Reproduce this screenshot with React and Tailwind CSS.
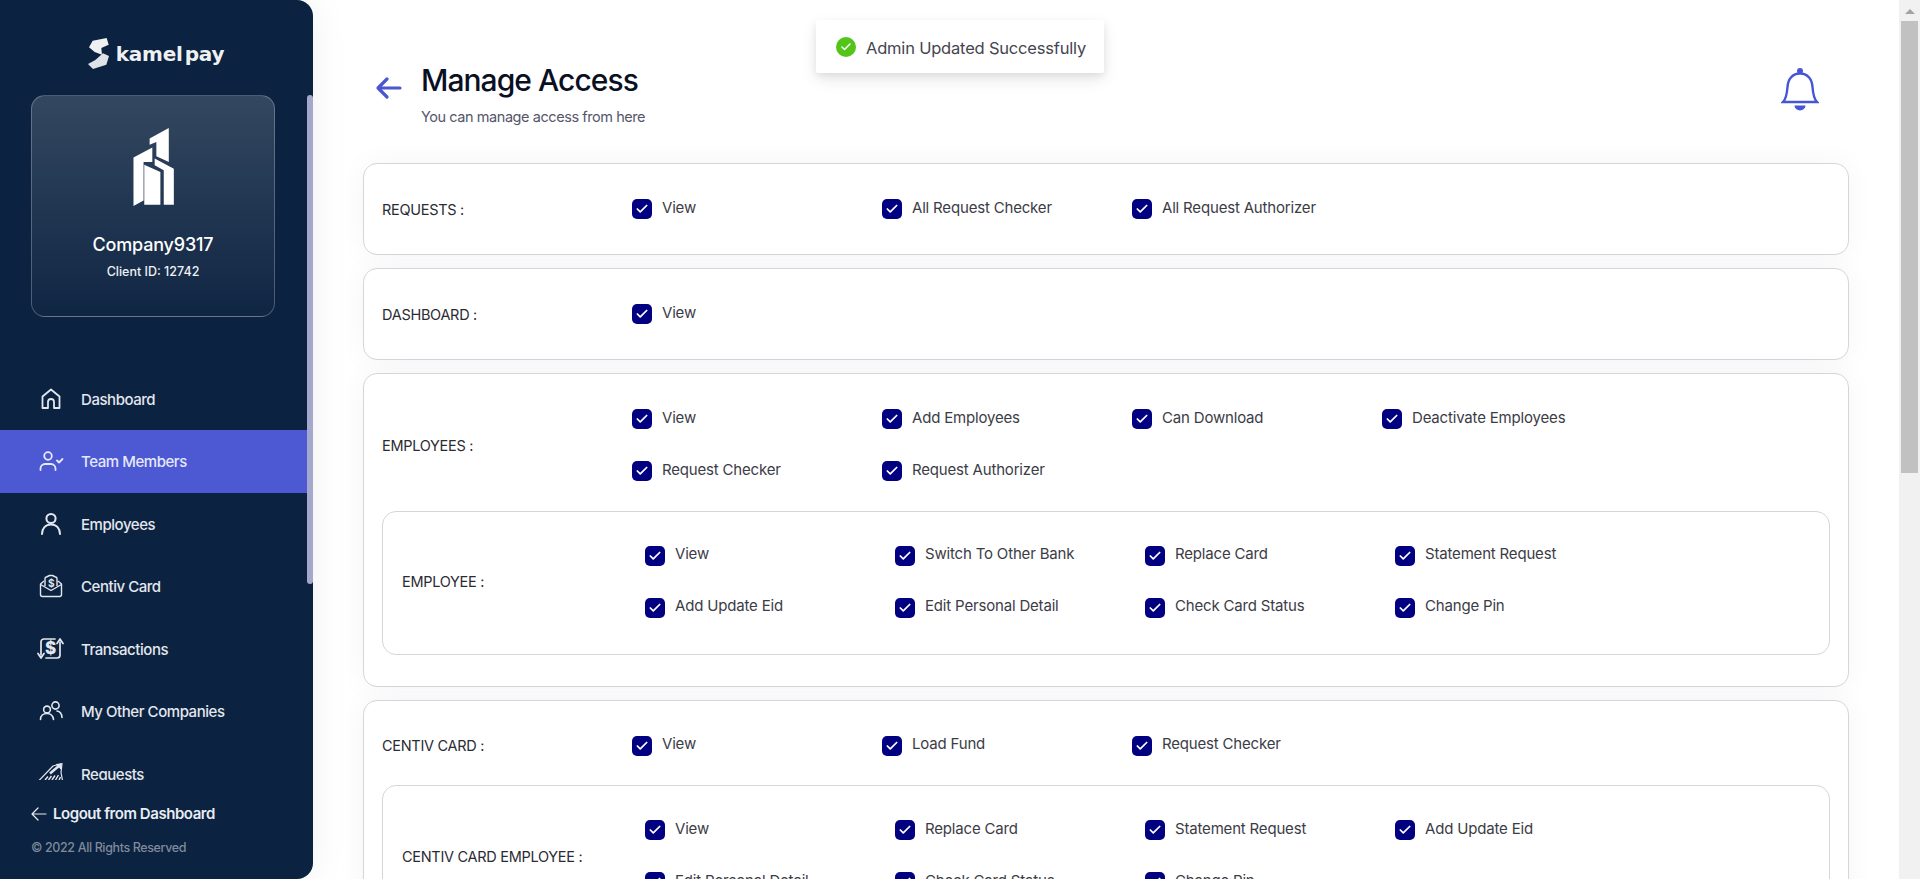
import { Check } from 'lucide-react';

const FONT = "font-['Inter','Noto_Sans',sans-serif]";

const navItems = [
  { label: 'Dashboard', icon: HomeIcon },
  { label: 'Team Members', icon: TeamIcon, active: true },
  { label: 'Employees', icon: UserIcon },
  { label: 'Centiv Card', icon: EnvelopeIcon },
  { label: 'Transactions', icon: TransferIcon },
  { label: 'My Other Companies', icon: UsersIcon },
  { label: 'Requests', icon: RequestsIcon },
];

function HomeIcon() {
  return (
    <svg width="26" height="26" viewBox="0 0 26 26" fill="none" stroke="currentColor" strokeWidth="1.8" strokeLinejoin="round">
      <path d="M4.500 10.500 13 3.500l8.500 7V22H16v-6a3 3 0 0 0-6 0v6H4.500z" />
    </svg>
  );
}

function TeamIcon() {
  return (
    <svg width="26" height="26" viewBox="0 0 26 26" fill="none" stroke="currentColor" strokeWidth="1.8" strokeLinecap="round" strokeLinejoin="round">
      <circle cx="10" cy="8" r="3.800" />
      <path d="M2.500 22v-1.500c0-2.500 2-4.500 4.500-4.500h6c2.500 0 4.500 2 4.500 4.500V22" />
      <path d="m19 12.500 2 2 3.500-3.500" />
    </svg>
  );
}

function UserIcon() {
  return (
    <svg width="26" height="26" viewBox="0 0 26 26" fill="none" stroke="currentColor" strokeWidth="2" strokeLinecap="round">
      <circle cx="13" cy="7.500" r="4.600" />
      <path d="M4 23c0-5.500 3.500-9.500 9-9.500s9 4 9 9.500" />
    </svg>
  );
}

function EnvelopeIcon() {
  return (
    <svg width="26" height="26" viewBox="0 0 26 26" fill="none" stroke="currentColor" strokeWidth="1.400" strokeLinejoin="round">
      <path d="M6 8 2.500 11v10.500a2 2 0 0 0 2 2h17a2 2 0 0 0 2-2V11L20 8" />
      <path d="M2.500 11.500 13 17.500l10.500-6" />
      <path d="M7 13V5.500A1.500 1.500 0 0 1 8.500 4l3-1.500h3L17.500 4A1.500 1.500 0 0 1 19 5.500V13" />
      <text x="13" y="13.500" textAnchor="middle" fontSize="10" fontWeight="700" fill="currentColor" stroke="none" fontFamily="Inter, sans-serif">$</text>
    </svg>
  );
}

function TransferIcon() {
  return (
    <svg width="27" height="23" viewBox="0 0 27 23" fill="none" stroke="currentColor" strokeWidth="1.700" strokeLinecap="round" strokeLinejoin="round">
      <path d="M4 18V5a3 3 0 0 1 3-3h11" />
      <path d="M23 5v13a3 3 0 0 1-3 3H9" />
      <path d="m1 16.500 3 4.500 3-4.500" />
      <path d="m20 6.500 3-4.500 3 4.500" />
      <text x="13.500" y="17" textAnchor="middle" fontSize="17" fontWeight="800" fill="currentColor" stroke="none" fontFamily="Inter, sans-serif">$</text>
    </svg>
  );
}

function UsersIcon() {
  return (
    <svg width="26" height="26" viewBox="0 0 26 26" fill="none" stroke="currentColor" strokeWidth="1.600" strokeLinecap="round">
      <circle cx="9" cy="11.500" r="3.400" />
      <path d="M2.500 21.500c0-3.500 2.500-6 6.500-6s6 2.500 6.500 6" />
      <circle cx="17.500" cy="7.500" r="3.600" />
      <path d="M19 13c3 .5 4.800 2.800 5 6.500" />
    </svg>
  );
}

function RequestsIcon() {
  return (
    <svg width="26" height="26" viewBox="0 0 26 26" fill="none" stroke="currentColor" strokeWidth="1.200" strokeLinejoin="round">
      <path d="M1 19.500 15 5l9-2.500-1 9 1.500 8z" />
      <path d="m12 12.500 10-8.500" strokeWidth="2.400" />
      <path d="m18 3.500 5-.5-.5 5" fill="currentColor" />
      <path d="m7 19 3-3.500M10.500 19l3-4M14 19l3-4.500M17.500 19l3-5M21 19l1.500-3" strokeWidth="1.400" />
    </svg>
  );
}

function BellIcon() {
  return (
    <svg width="38" height="44" viewBox="0 0 38 44" fill="none" className="text-[#4655d6]">
      <path d="M2 35c3.500-3.500 4-8.500 4.500-15 .5-8 5-13.500 12.500-13.500S31 12 31.500 20c.5 6.500 1 11.500 4.500 15z" stroke="currentColor" strokeWidth="2.400" />
      <circle cx="19" cy="4" r="3" fill="currentColor" />
      <path d="M13.500 38.500h11a5.500 5 0 0 1-11 0z" fill="currentColor" />
    </svg>
  );
}

function NavItem({ item }) {
  const Icon = item.icon;
  return (
    <div className={`flex h-[62.500px] shrink-0 items-center gap-[17px] pl-[37px] text-[15px] font-medium tracking-[-0.03em] ${item.active ? 'bg-[#4c59d2] text-[#e6e8fb]' : 'text-[#e3e7ee]'}`}>
      <span className="flex w-[27px] justify-center"><Icon /></span>
      <span className="translate-y-[0.500px]">{item.label}</span>
    </div>
  );
}

function Sidebar() {
  return (
    <aside className="flex h-[879px] w-[313px] shrink-0 overflow-hidden rounded-r-[16px] bg-[#0b2240] shadow-[0_0_40px_rgba(0,0,0,0.06)]">
      <div className="flex w-[307px] flex-col">
        <div className="flex h-[95px] items-start justify-center gap-[7px] pt-[38px] pl-[5px]">
          <svg width="21" height="31" viewBox="0 0 63 93" className="text-[#eef0f2]">
            <path d="M14 8 56 0l6 20-22 10 2 20-22-8L3 28z" fill="currentColor" />
            <path d="m45 46 18 8-8 26-40 13L0 78l22-12z" fill="#dfe2e6" />
          </svg>
          <span className="mt-[3px] font-['DejaVu_Sans',sans-serif] text-[20px] leading-[26px] font-bold tracking-[-0.01em] text-[#eef0f2]">
            kamel<span className="ml-[2px]">pay</span>
          </span>
        </div>
        <div className="mx-[31px] flex h-[222px] w-[244px] flex-col items-center rounded-[14px] border border-white/25 bg-gradient-to-b from-white/[0.17] to-white/[0.02]">
          <svg width="42" height="78" viewBox="40 24 122 232" className="mt-[32px] ml-[2px] text-white">
            <path d="M88 55 145 24v101l-37-17V66L88 74z" fill="currentColor" />
            <path d="M40 112 96 82v43L70 125v115l-30 16z" fill="currentColor" />
            <path d="m72 133 48 22v97H72z" fill="currentColor" />
            <path d="m103 115 57 30v107h-30V150l-27-15z" fill="currentColor" />
          </svg>
          <div className="mt-[26px] text-[18px] leading-[26px] font-medium tracking-[-0.01em] text-white">Company9317</div>
          <div className="mt-[5px] text-[12.500px] leading-[18px] font-medium text-[#eef0f4]">Client ID: 12742</div>
        </div>
        <nav className="mt-[50.500px] flex min-h-0 flex-1 flex-col overflow-hidden">
          {navItems.map((item) => (
            <NavItem key={item.label} item={item} />
          ))}
        </nav>
        <div className="h-[99px] shrink-0 pl-[31px]">
          <div className="mt-[22px] flex h-[24px] items-center gap-[6px] text-[15px] font-semibold tracking-[-0.03em] text-[#e9ecf2]">
            <svg width="16" height="14" viewBox="0 0 16 14" fill="none" stroke="currentColor" strokeWidth="1.200" strokeLinecap="round" strokeLinejoin="round">
              <path d="M15 7H1M7 1 1 7l6 6" />
            </svg>
            Logout from Dashboard
          </div>
          <div className="mt-[13px] text-[12.500px] leading-[18px] font-medium tracking-[-0.03em] text-[#7f8a9c]">© 2022 All Rights Reserved</div>
        </div>
      </div>
      <div className="w-[6px] shrink-0 pt-[95px]">
        <div className="h-[489px] rounded-[3px] bg-[#a3a8cc]" />
      </div>
    </aside>
  );
}

function Perm({ label }) {
  return (
    <div className="flex h-[52px] w-[250px] items-center gap-[10px]">
      <span className="flex h-[20px] w-[20px] shrink-0 translate-y-[1px] items-center justify-center rounded-[5px] bg-[#000080] text-white">
        <Check size={14} strokeWidth={3} />
      </span>
      <span className="text-[15px] tracking-[-0.012em] text-[#3c3c46]">{label}</span>
    </div>
  );
}

function PermRow({ label, items, nested }) {
  return (
    <div className="flex">
      <div className={`flex shrink-0 items-center pt-[3px] text-[14.500px] tracking-[-0.02em] text-[#2b2b33] ${nested ? 'w-[243px]' : 'w-[250px]'}`}>{label}</div>
      <div className="flex flex-1 flex-wrap">
        {items.map((name) => (
          <Perm key={name} label={name} />
        ))}
      </div>
    </div>
  );
}

function Section({ label, items, inner }) {
  return (
    <section className="mb-[13px] rounded-[14px] border border-[#d6d6d8] bg-white px-[18px] pt-[18px] pb-[20px] shadow-[0_0_30px_rgba(40,40,90,0.045)]">
      <PermRow label={label} items={items} />
      {inner && (
        <div className="mt-[14.500px] mb-[11px] rounded-[14px] border border-[#d6d6d8] px-[19px] pt-[17px] pb-[21px]">
          <PermRow label={inner.label} items={inner.items} nested />
        </div>
      )}
    </section>
  );
}

export default function App() {
  return (
    <div className={`relative flex h-[879px] w-[1920px] overflow-hidden bg-white ${FONT}`}>
      <Sidebar />
      <main className="min-w-0 flex-1 overflow-hidden px-[50px]">
        <header className="flex h-[163px] justify-between pt-[60px]">
          <div className="flex">
            <svg width="28" height="24" viewBox="0 0 28 24" fill="none" stroke="currentColor" strokeWidth="3.200" strokeLinecap="round" strokeLinejoin="round" className="mt-[16px] ml-[12px] text-[#4a57d1]">
              <path d="M25 12H3M12 3l-9 9 9 9" />
            </svg>
            <div className="ml-[18px]">
              <h1 className="text-[30px] leading-[40px] font-medium tracking-[-0.032em] text-[#0a1024]">Manage Access</h1>
              <p className="mt-[7px] text-[14.500px] leading-[20px] tracking-[-0.03em] text-[#55566a]">You can manage access from here</p>
            </div>
          </div>
          <div className="mt-[7px] mr-[30px]"><BellIcon /></div>
        </header>
        <Section label="REQUESTS :" items={['View', 'All Request Checker', 'All Request Authorizer']} />
        <Section label="DASHBOARD :" items={['View']} />
        <Section
          label="EMPLOYEES :"
          items={['View', 'Add Employees', 'Can Download', 'Deactivate Employees', 'Request Checker', 'Request Authorizer']}
          inner={{
            label: 'EMPLOYEE :',
            items: ['View', 'Switch To Other Bank', 'Replace Card', 'Statement Request', 'Add Update Eid', 'Edit Personal Detail', 'Check Card Status', 'Change Pin'],
          }}
        />
        <Section
          label="CENTIV CARD :"
          items={['View', 'Load Fund', 'Request Checker']}
          inner={{
            label: 'CENTIV CARD EMPLOYEE :',
            items: ['View', 'Replace Card', 'Statement Request', 'Add Update Eid', 'Edit Personal Detail', 'Check Card Status', 'Change Pin'],
          }}
        />
      </main>
      <div className="flex w-[21px] shrink-0 flex-col items-center bg-[#f1f1f1]">
        <div className="mt-[9px] h-0 w-0 border-x-[5px] border-b-[5px] border-x-transparent border-b-[#a3a3a3]" />
        <div className="mt-[7px] h-[452px] w-[17px] bg-[#c1c1c1]" />
      </div>
      <div className="absolute top-[20px] left-[816px] flex h-[53px] w-[288px] items-center gap-[10px] rounded-[2px] bg-white pl-[20px] text-[16.500px] tracking-[-0.012em] text-[#45454f] shadow-[0_6px_16px_rgba(0,0,0,0.1),0_3px_6px_rgba(0,0,0,0.06)]">
        <span className="flex h-[20px] w-[20px] items-center justify-center rounded-full bg-[#52c41a] text-white">
          <Check size={12} strokeWidth={3} />
        </span>
        <span className="translate-y-[1.500px]">Admin Updated Successfully</span>
      </div>
    </div>
  );
}
